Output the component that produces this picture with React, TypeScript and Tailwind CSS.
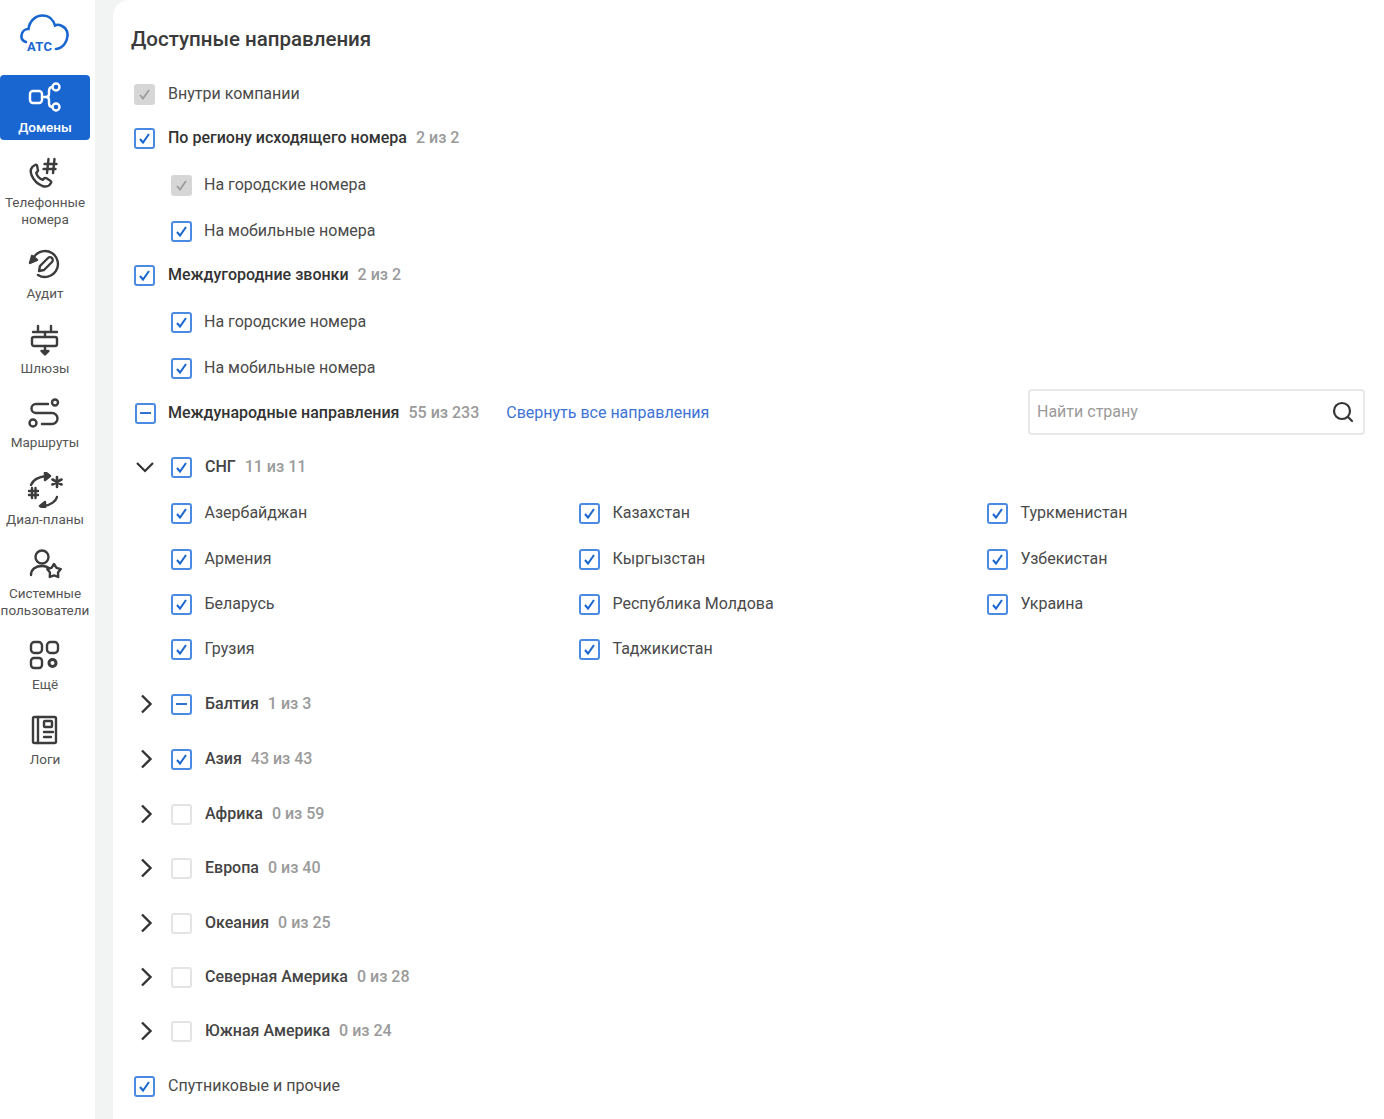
import type { ReactNode } from "react";

type CheckState = "on" | "off" | "mixed" | "locked";

function Check({ state }: { state: CheckState }) {
  if (state === "locked") {
    return (
      <span className="flex h-[21px] w-[21px] shrink-0 items-center justify-center rounded-[3px] bg-[#d6d6d6]">
        <svg width="15" height="15" viewBox="0 0 15 15" fill="none" stroke="#9c9c9c" strokeWidth="1.800">
          <path d="M3 8l3 3.500L12 3" />
        </svg>
      </span>
    );
  }
  if (state === "off") {
    return <span className="block h-[21px] w-[21px] shrink-0 rounded-[3px] border-2 border-[#e4e4e4] bg-white" />;
  }
  return (
    <span className="flex h-[21px] w-[21px] shrink-0 items-center justify-center rounded-[3px] border-2 border-[#4a8ae2] bg-white">
      {state === "on" ? (
        <svg width="15" height="15" viewBox="0 0 15 15" fill="none" stroke="#1a66d0" strokeWidth="2">
          <path d="M3 8l3 3.500L12 3" />
        </svg>
      ) : (
        <span className="h-[2px] w-[11px] bg-[#2f72d4]" />
      )}
    </span>
  );
}

function Count({ children }: { children: ReactNode }) {
  return <span className="ml-[9px] font-medium text-[#9a9a9a]">{children}</span>;
}

function Row({
  state,
  label,
  count,
  bold,
  indent,
  top,
}: {
  state: CheckState;
  label: string;
  count?: string;
  bold?: boolean;
  indent?: boolean;
  top: string;
}) {
  return (
    <div className={`flex h-6 items-center ${indent ? "pl-[58px]" : "pl-[21px]"} ${top}`}>
      <Check state={state} />
      <span className={`${indent ? "ml-[12px]" : "ml-[13px]"} whitespace-nowrap ${bold ? "font-medium text-[#333]" : "text-[#4a4a4a]"}`}>
        {label}
      </span>
      {count && <Count>{count}</Count>}
    </div>
  );
}

function Region({ state, label, count, top }: { state: CheckState; label: string; count: string; top: string }) {
  return (
    <div className={`flex h-6 items-center pl-[26px] ${top}`}>
      <svg width="16" height="22" viewBox="0 0 16 22" fill="none" stroke="#333" strokeWidth="2.400" className="shrink-0">
        <path d="M3 2.500l8.500 8.500L3 19.500" />
      </svg>
      <span className="ml-[16px] flex shrink-0">
        <Check state={state} />
      </span>
      <span className="ml-[13px] whitespace-nowrap font-medium text-[#444]">{label}</span>
      <Count>{count}</Count>
    </div>
  );
}

const countries = [
  ["Азербайджан", "Казахстан", "Туркменистан"],
  ["Армения", "Кыргызстан", "Узбекистан"],
  ["Беларусь", "Республика Молдова", "Украина"],
  ["Грузия", "Таджикистан", ""],
];

const rowTops = ["mt-[22px]", "mt-[22px]", "mt-[21px]", "mt-[21px]"];

function LogoIcon() {
  return (
    <div className="relative h-[40px] w-[50px]">
      <svg width="50" height="40" viewBox="0 0 50 40" fill="none" stroke="#1a66d0" strokeWidth="2.600" strokeLinecap="round">
        <path d="M6 30C3 29 1 27 1.500 23.500 2 19.500 5 17 8.500 17 9.500 9 15.500 3.500 22.500 3.500 29 3.500 33.500 8 35 13.500 37 12.500 39 12.500 41 13.500 45.500 15.500 48 19.500 47.500 24 47 30 43 36.500 36 37" />
      </svg>
      <span className="absolute left-[7px] top-[28px] text-[13px] font-bold leading-none tracking-[0.3px] text-[#1a66d0]">АТС</span>
    </div>
  );
}

const iconProps = {
  width: 36,
  height: 36,
  viewBox: "0 0 36 36",
  fill: "none",
  stroke: "#3c3c3c",
  strokeWidth: 2.4,
  strokeLinecap: "round" as const,
  strokeLinejoin: "round" as const,
};

function DomainIcon() {
  return (
    <svg {...iconProps} stroke="#fff">
      <rect x="3" y="12" width="12" height="12" rx="3" />
      <path d="M15 18h4c2 0 3-1 3-3v-3c0-2 1-4 3-4M19 18c2 0 3 1 3 3v3c0 2 1 4 3 4" />
      <circle cx="29" cy="8" r="3.500" />
      <circle cx="29" cy="28" r="3.500" />
    </svg>
  );
}

function PhoneIcon() {
  return (
    <svg {...iconProps}>
      <path d="M8 10c-4 2-5 6-3.500 10 2 5 6 9 11 11 3.500 1.200 7 0 8.500-3 .5-1 0-2-1-2.500l-3.500-2.200c-1-.5-2-.5-2.800.5l-1 1c-2.800-1-5.500-3.800-6.500-7l1-1c1-1 1-2 .5-3L10 10.500c-.4-.6-1.300-.9-2-.5z" />
      <path strokeWidth="2.400" d="M17.500 9h12M16.500 14h12M21.500 4L20 18M27.500 4L26 18" />
    </svg>
  );
}

function AuditIcon() {
  return (
    <svg {...iconProps}>
      <path d="M7 11A13 13 0 1 1 11 29" />
      <path d="M3 17l2-7 5 4z" fill="#3c3c3c" />
      <path d="M12 25l1-5 8-8c1-1 3-1 4 0s1 3 0 4l-8 8-5 1z" />
    </svg>
  );
}

function GatewayIcon() {
  return (
    <svg {...iconProps}>
      <path d="M6 11h24M11 5v6M24 5v6" />
      <rect x="5" y="16" width="25" height="9" rx="2" />
      <path d="M18 11v5M18 25v7" />
      <path d="M14.500 30l3.500 3.500 3.500-3.500z" fill="#3c3c3c" />
    </svg>
  );
}

function RouteIcon() {
  return (
    <svg {...iconProps}>
      <path d="M21 9H9a4.500 4.500 0 0 0 0 9h16a5.500 5.500 0 0 1 0 11H15" />
      <circle cx="28" cy="7.500" r="3" />
      <circle cx="6" cy="28" r="3.500" />
    </svg>
  );
}

function DialIcon() {
  return (
    <svg {...iconProps}>
      <path d="M4 13C6 8 10 5 19 4" />
      <path d="M18 0l5 4-5 4z" fill="#3c3c3c" />
      <path d="M30 25c-1 4-6 8-13 9" />
      <path d="M18 30l-5 4 5 3z" fill="#3c3c3c" />
      <path strokeWidth="2.400" d="M2 19h9M2 23h9M5 16v10M8.500 16v10" />
      <path strokeWidth="2.600" d="M30 5v10M25.500 7.500l9 5M34.500 7.500l-9 5" />
    </svg>
  );
}

function UsersIcon() {
  return (
    <svg {...iconProps}>
      <circle cx="15" cy="11" r="6.500" />
      <path d="M4 29c0-6 5-9 11-9 3 0 5 .5 7 2" />
      <path d="M27 18l2.500 3.800 4.300 1.300-2.800 3.400.2 4.500-4.200-1.600-4.200 1.600.2-4.500-2.800-3.400 4.300-1.300z" />
    </svg>
  );
}

function MoreIcon() {
  return (
    <svg {...iconProps}>
      <rect x="4" y="5" width="11" height="11" rx="3.500" />
      <rect x="20" y="5" width="11" height="11" rx="3.500" />
      <rect x="4" y="21" width="11" height="10" rx="3" />
      <circle cx="25.500" cy="26" r="3.500" strokeWidth="3" />
    </svg>
  );
}

function LogsIcon() {
  return (
    <svg {...iconProps}>
      <rect x="6" y="5" width="23" height="26" rx="1.500" />
      <path d="M11 5v26" />
      <rect x="17" y="9" width="8" height="6" rx="1" />
      <path d="M17 20h9M17 25h7" />
    </svg>
  );
}

const navItems = [
  { label: ["Телефонные", "номера"], icon: <PhoneIcon />, h: "h-[91px]" },
  { label: ["Аудит"], icon: <AuditIcon />, h: "h-[75px]" },
  { label: ["Шлюзы"], icon: <GatewayIcon />, h: "h-[74px]" },
  { label: ["Маршруты"], icon: <RouteIcon />, h: "h-[77px]" },
  { label: ["Диал-планы"], icon: <DialIcon />, h: "h-[74px]" },
  { label: ["Системные", "пользователи"], icon: <UsersIcon />, h: "h-[91px]" },
  { label: ["Ещё"], icon: <MoreIcon />, h: "h-[75px]" },
  { label: ["Логи"], icon: <LogsIcon />, h: "h-[75px]" },
];

function Sidebar() {
  return (
    <aside className="w-[95px] shrink-0 bg-white">
      <div className="flex h-[75px] w-[90px] items-start justify-center pt-[12px]">
        <LogoIcon />
      </div>
      <div className="flex h-[65px] w-[90px] flex-col items-center rounded-[4px] bg-[#1a66d0] pt-[4px] text-white">
        <DomainIcon />
        <span className="mt-[4px] text-[13.500px] font-medium leading-4">Домены</span>
      </div>
      <nav className="w-[90px] pt-[15px]">
        {navItems.map((item) => (
          <div key={item.label[0]} className={`flex flex-col items-center text-[#555] ${item.h}`}>
            {item.icon}
            <span className="mt-[3px] whitespace-nowrap text-center text-[13.500px] leading-[17px]">
              {item.label.map((l) => (
                <span key={l} className="block">
                  {l}
                </span>
              ))}
            </span>
          </div>
        ))}
      </nav>
    </aside>
  );
}

export default function App() {
  return (
    <div className="flex h-[1119px] w-[1384px] overflow-hidden bg-[#f2f4f4] font-['Roboto',sans-serif] text-[16px]">
      <Sidebar />
      <main className="ml-[18px] flex-1 rounded-tl-[16px] bg-white pt-[27px]">
        <h1 className="pl-[18px] text-[20.500px] font-medium leading-6 text-[#3a3a3a]">Доступные направления</h1>

        <Row top="mt-[31px]" state="locked" label="Внутри компании" />
        <Row top="mt-[20px]" state="on" bold label="По региону исходящего номера" count="2 из 2" />
        <Row top="mt-[23px]" state="locked" indent label="На городские номера" />
        <Row top="mt-[22px]" state="on" indent label="На мобильные номера" />
        <Row top="mt-[20px]" state="on" bold label="Междугородние звонки" count="2 из 2" />
        <Row top="mt-[23px]" state="on" indent label="На городские номера" />
        <Row top="mt-[22px]" state="on" indent label="На мобильные номера" />

        <div className="mt-[21px] flex h-6 items-center pl-[22px] pr-[19px]">
          <Check state="mixed" />
          <span className="ml-[12px] whitespace-nowrap font-medium text-[#333]">Международные направления</span>
          <Count>55 из 233</Count>
          <a className="ml-[27px] whitespace-nowrap text-[#3d74d6]">Свернуть все направления</a>
          <div className="ml-auto flex h-[46px] w-[337px] -translate-y-[1px] items-center justify-between rounded-[4px] border-2 border-[#e8e8e8] pl-[7px] pr-[8px] text-[#9a9a9a]">
            <span>Найти страну</span>
            <svg width="24" height="24" viewBox="0 0 24 24" fill="none" stroke="#333" strokeWidth="2.200" strokeLinecap="round">
              <circle cx="11" cy="11" r="8" />
              <path d="M17 17l4 4" />
            </svg>
          </div>
        </div>

        <div className="mt-[30px] flex h-6 items-center pl-[23px]">
          <svg width="18" height="12" viewBox="0 0 18 12" fill="none" stroke="#333" strokeWidth="2.200" className="shrink-0">
            <path d="M1 2l8 8 8-8" />
          </svg>
          <span className="ml-[17px] flex shrink-0">
            <Check state="on" />
          </span>
          <span className="ml-[13px] font-medium text-[#444]">СНГ</span>
          <Count>11 из 11</Count>
        </div>

        {countries.map((row, i) => (
          <div key={row[0]} className={`grid h-6 grid-cols-[408px_408px_1fr] pl-[57.500px] ${rowTops[i]}`}>
            {row.map(
              (name) =>
                name && (
                  <div key={name} className="flex items-center">
                    <Check state="on" />
                    <span className="ml-[13px] whitespace-nowrap text-[#4a4a4a]">{name}</span>
                  </div>
                ),
            )}
          </div>
        ))}

        <Region top="mt-[31px]" state="mixed" label="Балтия" count="1 из 3" />
        <Region top="mt-[31px]" state="on" label="Азия" count="43 из 43" />
        <Region top="mt-[31px]" state="off" label="Африка" count="0 из 59" />
        <Region top="mt-[30px]" state="off" label="Европа" count="0 из 40" />
        <Region top="mt-[31px]" state="off" label="Океания" count="0 из 25" />
        <Region top="mt-[30px]" state="off" label="Северная Америка" count="0 из 28" />
        <Region top="mt-[30px]" state="off" label="Южная Америка" count="0 из 24" />

        <Row top="mt-[31px]" state="on" label="Спутниковые и прочие" />
      </main>
    </div>
  );
}
